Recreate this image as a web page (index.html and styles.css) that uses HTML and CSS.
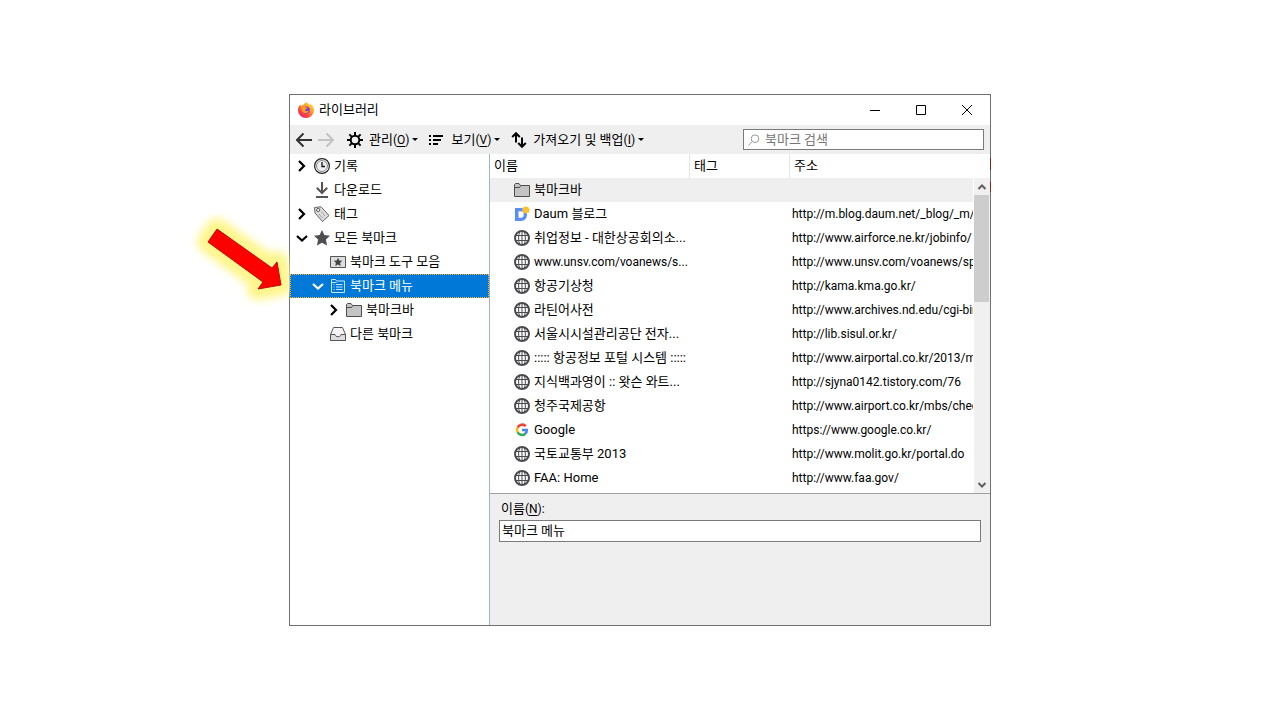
FILE: index.html
```
<!DOCTYPE html>
<html lang="ko">
<head>
    <meta charset="UTF-8">
    <meta name="viewport" content="width=device-width, initial-scale=1.0">
    <title>라이브러리</title>
    <link rel="stylesheet" href="styles.css">
</head>
<body>
    <!-- Shared icons -->
    <svg class="sprite" aria-hidden="true">
        <symbol id="globe" viewBox="0 0 16 16">
            <circle cx="8" cy="8" r="7" fill="#fff" stroke="#4a4a4f" stroke-width="2"/>
            <path d="M1.500 5.500h13M1.500 10.500h13M8 1v14M5.800 1.500C4.200 5 4.200 11 5.800 14.500M10.200 1.500c1.600 3.500 1.600 9.500 0 13" fill="none" stroke="#4a4a4f" stroke-width="1"/>
        </symbol>
        <symbol id="folder" viewBox="0 0 16 16">
            <path d="M.5 14.500V2.500l1-1h3.500l1.500 2h9v11z" fill="#c4c4c4" stroke="#4d4d4d"/>
            <path d="M1 5.500h4.500l1-1.500" fill="none" stroke="#4d4d4d"/>
        </symbol>
        <symbol id="right" viewBox="0 0 16 16">
            <path d="M5 3 10 8l-5 5" fill="none" stroke="currentColor" stroke-width="2.200"/>
        </symbol>
        <symbol id="down" viewBox="0 0 16 16">
            <path d="M3 6l5 4.500L13 6" fill="none" stroke="currentColor" stroke-width="2.200"/>
        </symbol>
    </svg>

    <main class="window">
        <header class="titlebar">
            <svg class="icon" viewBox="0 0 16 16" aria-hidden="true">
                <defs>
                    <linearGradient id="fire" x1="1" y1="0" x2="0.200" y2="1">
                        <stop offset="0" stop-color="#fff04a"/>
                        <stop offset="0.400" stop-color="#ffa428"/>
                        <stop offset="0.700" stop-color="#ff4b3e"/>
                        <stop offset="1" stop-color="#f0146c"/>
                    </linearGradient>
                </defs>
                <path d="M8.500 0c1 1.700 2.500 2 3.500 3 .6-.1.700-.9.600-1.300C15 3.500 16 6 16 8.300A8 7.700 0 0 1 0 8.300C0 6 1 3.800 2.200 2.500l.5 1.300 2-.5C6 2 7 1 8.500 0z" fill="url(#fire)"/>
                <circle cx="8.200" cy="8" r="3.600" fill="#7a3fd0"/>
                <path d="M3 4.500c2-.8 3.800-.3 4.800 1l2 .3C9 7.300 7.300 7 7 8.300c1 1.500 3 1 4 .2-.7 3-5.500 3.600-7 .8z" fill="#ff9b24"/>
            </svg>
            <h1>라이브러리</h1>
            <div class="window-buttons">
                <button type="button" aria-label="최소화"><svg viewBox="0 0 12 12"><path d="M1 6.500h10"/></svg></button>
                <button type="button" aria-label="최대화"><svg viewBox="0 0 12 12"><path d="M1.500 1.500h9v9h-9z"/></svg></button>
                <button type="button" aria-label="닫기"><svg viewBox="0 0 12 12"><path d="M1 1l10 10M11 1 1 11"/></svg></button>
            </div>
        </header>

        <div class="toolbar">
            <div class="nav">
                <button type="button" aria-label="뒤로"><svg class="icon" viewBox="0 0 16 16"><path d="M16 8H1.500M7.500 1.500 1 8l6.500 6.500"/></svg></button>
                <button type="button" aria-label="앞으로" disabled><svg class="icon" viewBox="0 0 16 16"><path d="M0 8h14.500M8.500 1.500 15 8l-6.500 6.500"/></svg></button>
            </div>
            <button type="button" class="menu-button">
                <svg class="icon" viewBox="0 0 16 16"><circle cx="8" cy="8" r="4.300" fill="none" stroke="#000" stroke-width="2"/><path d="M8 0v3.500M8 12.500V16M0 8h3.500M12.500 8H16M2.400 2.400l2.500 2.500M11.100 11.100l2.500 2.500M13.600 2.400l-2.500 2.500M4.900 11.100l-2.500 2.500" stroke="#000" stroke-width="2"/></svg>
                <span>관리<span class="latin">(<u>O</u>)</span></span><i class="caret"></i>
            </button>
            <button type="button" class="menu-button">
                <svg class="icon" viewBox="0 0 16 16"><path d="M0 4h2M0 8h2M0 12h2M4 4h10M4 8h8M4 12h5" stroke="#000" stroke-width="2"/></svg>
                <span>보기<span class="latin">(<u>V</u>)</span></span><i class="caret"></i>
            </button>
            <button type="button" class="menu-button">
                <svg class="icon" viewBox="0 0 16 16"><path d="M5 10.500V2M1.200 5 5 1.200 8.800 5M11 5.500v9M7.200 11l3.800 3.800 3.800-3.800" fill="none" stroke="#000" stroke-width="2"/></svg>
                <span>가져오기 및 백업<span class="latin">(<u>I</u>)</span></span><i class="caret"></i>
            </button>
            <label class="search">
                <svg viewBox="0 0 12 12" aria-hidden="true"><circle cx="7" cy="4.700" r="3.800"/><path d="M4.200 7.500.5 11.500"/></svg>
                <input type="text" placeholder="북마크 검색" aria-label="북마크 검색">
            </label>
        </div>

        <div class="content">
            <nav class="tree">
                <ul>
                    <li><button type="button"><svg class="icon"><use href="#right"/></svg><svg class="icon" viewBox="0 0 16 16"><circle cx="8" cy="8" r="7.400" fill="#fff" stroke="#222" stroke-width="1.200"/><circle cx="8" cy="8" r="5.500" fill="#eee" stroke="#888"/><path d="M8 4v4.500h3" fill="none" stroke="#111" stroke-width="1.300"/></svg>기록</button></li>
                    <li><button type="button"><span class="icon"></span><svg class="icon" viewBox="0 0 16 16"><path d="M8 0v11M2.800 5.800 8 11l5.200-5.200M2 15h12" fill="none" stroke="#555" stroke-width="2"/></svg>다운로드</button></li>
                    <li><button type="button"><svg class="icon"><use href="#right"/></svg><svg class="icon" viewBox="0 0 16 16"><path d="M.5 1.500 1 7l7.500 8.500 6.500-6L7 .8z" fill="#ddd" stroke="#666"/><circle cx="4.200" cy="4" r="1.600" fill="#fff" stroke="#555"/><path d="M5 8l4 4.500M7.500 6l4 4.500" stroke="#888" stroke-dasharray="2 1"/></svg>태그</button></li>
                    <li>
                        <button type="button"><svg class="icon"><use href="#down"/></svg><svg class="icon" viewBox="0 0 16 16"><path d="M8 0l2.400 5.100 5.600.6-4.100 3.900 1.200 6L8 12.800l-5.100 2.800 1.200-6L0 5.700l5.600-.6z" fill="#4f4f4f"/></svg>모든 북마크</button>
                        <ul>
                            <li><button type="button"><span class="icon"></span><svg class="icon" viewBox="0 0 16 16"><path d="M.5 2.500h15v11H.5z" fill="#ddd" stroke="#555"/><path d="M8 3.700l1.300 2.800 3 .3-2.200 2 .6 3.200L8 10.500 5.300 12l.6-3.200-2.200-2 3-.3z" fill="#444"/></svg>북마크 도구 모음</button></li>
                            <li>
                                <button type="button" class="selected"><svg class="icon"><use href="#down"/></svg><svg class="icon" viewBox="0 0 16 16"><path d="M1.500 14.500v-13h4l1 1.500h8v11.500zM1.500 4.500h5M3.500 6.500h1M3.500 9h1M3.500 11.500h1M6 6.500h6.500M6 9h6.500M6 11.500h6.500" fill="none" stroke="#c9e5ff"/></svg>북마크 메뉴</button>
                                <ul>
                                    <li><button type="button"><svg class="icon"><use href="#right"/></svg><svg class="icon"><use href="#folder"/></svg>북마크바</button></li>
                                </ul>
                            </li>
                            <li><button type="button"><span class="icon"></span><svg class="icon" viewBox="0 0 16 16"><path d="M3.500 1.500h9l3 7v6H.5v-6z" fill="#f4f4f4" stroke="#555"/><path d="M.5 8.500H5c.3 3 5.700 3 6 0h4.500v6H.5z" fill="#ddd" stroke="#555"/></svg>다른 북마크</button></li>
                        </ul>
                    </li>
                </ul>
            </nav>

            <section class="detail">
                <div class="list">
                    <table>
                        <thead>
                            <tr><th class="col-name">이름</th><th class="col-tag">태그</th><th>주소</th></tr>
                        </thead>
                        <tbody>
                            <tr class="current"><td><svg class="icon"><use href="#folder"/></svg>북마크바</td><td></td><td></td></tr>
                            <tr><td><svg class="icon" viewBox="0 0 16 16"><path d="M1 2h6c4 0 6 2.800 6 6.300S11 15 7 15H1zm3.500 3.300v6.500H7c1.800 0 2.700-1.300 2.700-3.300S8.800 5.300 7 5.300z" fill="#5b8ef5" fill-rule="evenodd"/><path d="M11.500 0l1.300 1 1.600-.1.400 1.600 1.200 1.100-.9 1.300v1.600l-1.600.3-1.200 1-1.400-.8-1.700-.1-.2-1.600-1-1.200.9-1.300.1-1.600 1.600-.2z" fill="#ffc02e"/></svg>Daum 블로그</td><td></td><td class="latin">http://m.blog.daum.net/_blog/_m/</td></tr>
                            <tr><td><svg class="icon"><use href="#globe"/></svg>취업정보 - 대한상공회의소...</td><td></td><td class="latin">http://www.airforce.ne.kr/jobinfo/</td></tr>
                            <tr><td class="latin"><svg class="icon"><use href="#globe"/></svg>www.unsv.com/voanews/s...</td><td></td><td class="latin">http://www.unsv.com/voanews/sp</td></tr>
                            <tr><td><svg class="icon"><use href="#globe"/></svg>항공기상청</td><td></td><td class="latin">http://kama.kma.go.kr/</td></tr>
                            <tr><td><svg class="icon"><use href="#globe"/></svg>라틴어사전</td><td></td><td class="latin">http://www.archives.nd.edu/cgi-bin</td></tr>
                            <tr><td><svg class="icon"><use href="#globe"/></svg>서울시시설관리공단 전자...</td><td></td><td class="latin">http://lib.sisul.or.kr/</td></tr>
                            <tr><td><svg class="icon"><use href="#globe"/></svg>::::: 항공정보 포털 시스템 :::::</td><td></td><td class="latin">http://www.airportal.co.kr/2013/m</td></tr>
                            <tr><td><svg class="icon"><use href="#globe"/></svg>지식백과영이 :: 왓슨 와트...</td><td></td><td class="latin">http://sjyna0142.tistory.com/76</td></tr>
                            <tr><td><svg class="icon"><use href="#globe"/></svg>청주국제공항</td><td></td><td class="latin">http://www.airport.co.kr/mbs/chec</td></tr>
                            <tr><td><svg class="icon" viewBox="0 0 16 16"><g fill="none" stroke-width="2.500"><path d="M11.800 4.200A5 5 0 0 0 3.600 5.600" stroke="#ea4335"/><path d="M3.600 5.600a5 5 0 0 0 0 4.600" stroke="#fbbc05"/><path d="M3.600 10.200a5 5 0 0 0 7.700 1.500" stroke="#34a853"/><path d="M11.300 11.700A5 5 0 0 0 12.800 8H8" stroke="#4285f4"/></g></svg>Google</td><td></td><td class="latin">https://www.google.co.kr/</td></tr>
                            <tr><td><svg class="icon"><use href="#globe"/></svg>국토교통부 2013</td><td></td><td class="latin">http://www.molit.go.kr/portal.do</td></tr>
                            <tr><td><svg class="icon"><use href="#globe"/></svg>FAA: Home</td><td></td><td class="latin">http://www.faa.gov/</td></tr>
                        </tbody>
                    </table>
                    <div class="scrollbar">
                        <button type="button" aria-label="위로"><svg viewBox="0 0 8 6"><path d="M.5 5 4 1.500 7.500 5"/></svg></button>
                        <div class="thumb"></div>
                        <button type="button" aria-label="아래로"><svg viewBox="0 0 8 6"><path d="M.5 1 4 4.500 7.500 1"/></svg></button>
                    </div>
                </div>
                <form class="editor">
                    <label for="name">이름<span class="latin">(<u>N</u>):</span></label>
                    <input type="text" id="name" name="name" value="북마크 메뉴">
                </form>
            </section>
        </div>

        <!-- Pointer to the selected folder -->
        <svg class="pointer" viewBox="0 0 110 100" aria-hidden="true">
            <defs>
                <filter id="blur" x="-30%" y="-30%" width="160%" height="160%"><feGaussianBlur stdDeviation="4"/></filter>
            </defs>
            <path d="M27 24 82 63l5-6 4 23-23 4 5-7-55-40z" fill="#fff68c" stroke="#fff68c" stroke-width="22" stroke-linejoin="round" filter="url(#blur)"/>
            <path d="M27 24 82 63l5-6 4 23-23 4 5-7-55-40z" fill="#fe0000" stroke="#b90d0d"/>
        </svg>
    </main>
</body>
</html>
```
FILE: styles.css
```
* {
    margin: 0;
    padding: 0;
    box-sizing: border-box;
}

body {
    display: flex;
    flex-direction: column;
    align-items: center;
    min-height: 100vh;
    padding: 94px 16px;
    background: #fff;
    color: #000;
    font-family: Roboto, "Noto Sans CJK KR", sans-serif;
    font-size: 13px;
    line-height: 24px;
}

button,
input {
    border: none;
    background: none;
    color: inherit;
    font: inherit;
}

ul {
    list-style: none;
}

.sprite {
    position: absolute;
    width: 0;
    height: 0;
}

.icon {
    flex: none;
    width: 16px;
    height: 16px;
}

.latin {
    font-size: 12px;
}

.window {
    position: relative;
    display: flex;
    flex: 1;
    flex-direction: column;
    width: 100%;
    max-width: 702px;
    border: 1px solid #707070;
}

/* Worn spots on the right edge of the frame */
.window::after {
    content: "";
    position: absolute;
    top: 63px;
    right: -1px;
    width: 1px;
    height: 34px;
    background: linear-gradient(#7a2a20 12px, transparent 12px, transparent 24px, #7a2a20 24px);
}

/* Title bar */
.titlebar {
    display: flex;
    align-items: center;
    height: 30px;
    padding-left: 8px;
    gap: 5px;
}

.titlebar h1 {
    font-size: 13px;
    font-weight: 400;
}

.window-buttons {
    display: flex;
    margin-left: auto;
}

.window-buttons button {
    display: flex;
    align-items: center;
    justify-content: center;
    width: 46px;
    height: 30px;
}

.window-buttons svg {
    width: 12px;
    height: 12px;
    fill: none;
    stroke: #000;
}

/* Toolbar */
.toolbar {
    display: flex;
    align-items: center;
    gap: 11px;
    height: 29px;
    padding: 0 6px;
    background: #efefef;
}

.nav {
    display: flex;
    gap: 6px;
    margin-right: 2px;
}

.nav button {
    display: flex;
}

.nav path {
    fill: none;
    stroke: #333;
    stroke-width: 2;
}

.nav button:disabled path {
    stroke: #c4c4c4;
}

.menu-button {
    display: flex;
    align-items: center;
    gap: 6px;
    white-space: nowrap;
}

.menu-button u,
.editor u {
    text-underline-offset: 2px;
}

.caret {
    margin-left: -3px;
    border: 3px solid transparent;
    border-top-color: #000;
    border-bottom: none;
}

.search {
    display: flex;
    align-items: center;
    gap: 5px;
    width: 241px;
    height: 21px;
    margin-left: auto;
    padding: 0 4px;
    border: 1px solid #7a7a7a;
    background: #fff;
}

.search svg {
    flex: none;
    width: 12px;
    height: 12px;
    fill: none;
    stroke: #999;
}

.search input {
    width: 100%;
    height: 19px;
    outline: none;
}

.search input::placeholder {
    color: #757575;
}

/* Folder tree */
.content {
    display: flex;
    flex: 1;
}

.tree {
    flex: none;
    width: 200px;
    border-right: 1px solid #a0b4c8;
}

.tree button {
    display: flex;
    align-items: center;
    gap: 4px;
    width: 100%;
    height: 24px;
    padding-left: 4px;
    white-space: nowrap;
}

.tree ul ul button {
    padding-left: 20px;
}

.tree ul ul ul button {
    padding-left: 36px;
}

.tree .selected {
    background: #0078d7;
    color: #fff;
    outline: 1px dotted #ffb030;
    outline-offset: -1px;
}

/* Bookmark list */
.detail {
    display: flex;
    flex: 1;
    flex-direction: column;
    min-width: 0;
}

.list {
    display: flex;
    position: relative;
    padding-bottom: 3px;
    border-bottom: 1px solid #a0a0a0;
}

table {
    width: 100%;
    border-spacing: 0;
    table-layout: fixed;
}

th,
td {
    height: 24px;
    overflow: hidden;
    text-align: left;
    white-space: nowrap;
}

th {
    padding-left: 4px;
    border-right: 1px solid #e5e5e5;
    font-weight: 400;
}

td {
    padding-left: 2px;
}

th:last-child {
    border-right: none;
}

td:first-child {
    padding-left: 24px;
}

td .icon {
    margin: -2px 4px 0 0;
    vertical-align: middle;
}

.col-name {
    width: 200px;
}

.col-tag {
    width: 100px;
}

.current {
    background: #efefef;
}

.scrollbar {
    position: absolute;
    top: 24px;
    right: 0;
    bottom: 0;
    display: flex;
    flex-direction: column;
    width: 17px;
    border-left: 1px solid #fff;
    background: #f0f0f0;
}

.scrollbar button {
    display: flex;
    align-items: center;
    justify-content: center;
    height: 17px;
}

.scrollbar button:last-child {
    margin-top: auto;
}

.scrollbar svg {
    width: 8px;
    height: 6px;
    fill: none;
    stroke: #606060;
    stroke-width: 2;
}

.thumb {
    height: 107px;
    margin-right: 1px;
    background: #cdcdcd;
}

/* Name editor */
.editor {
    flex: 1;
    padding: 3px 9px;
    background: #efefef;
}

.editor label {
    display: block;
    padding-left: 2px;
    line-height: 23px;
}

.editor .latin {
    line-height: 1;
}

.editor input {
    display: block;
    width: 100%;
    height: 22px;
    padding: 0 2px;
    border: 1px solid #7a7a7a;
    background: #fff;
}

.pointer {
    position: absolute;
    top: 110px;
    left: -100px;
    width: 110px;
    height: 100px;
    pointer-events: none;
    clip-path: inset(-10px 10px -10px -10px);
    overflow: visible;
}
```
